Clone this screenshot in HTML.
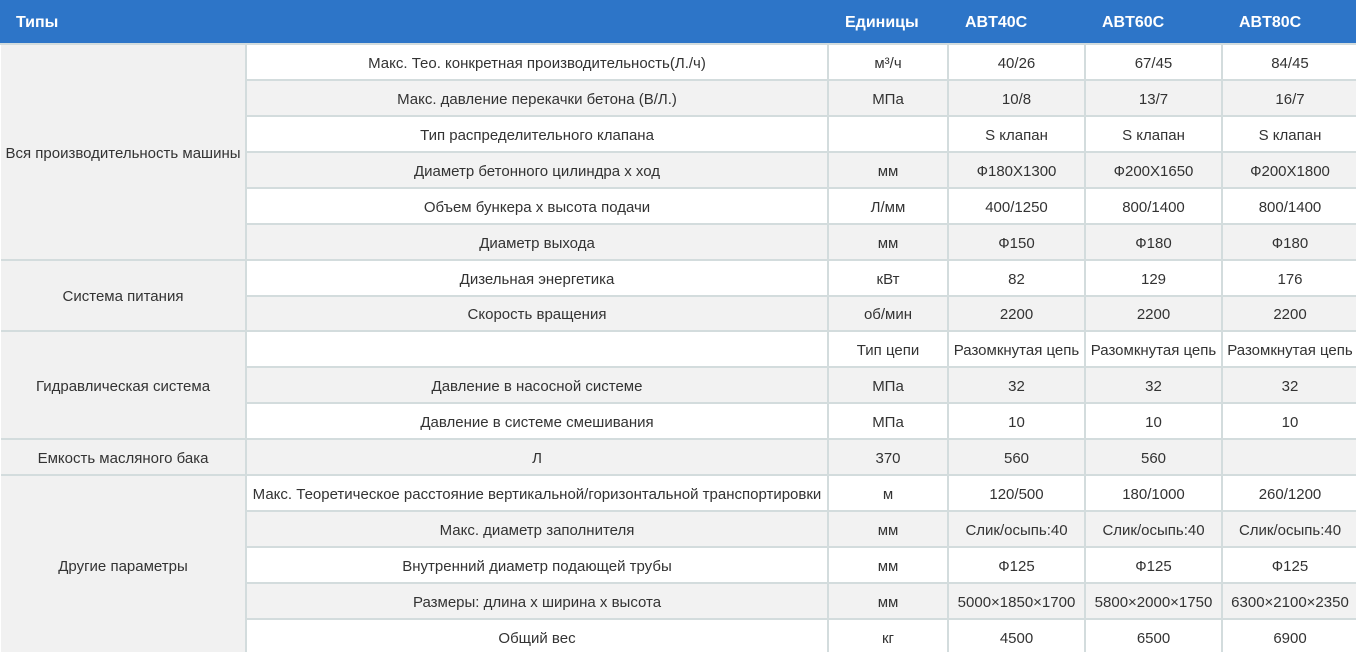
<!DOCTYPE html>
<html><head><meta charset="utf-8"><style>
html,body{margin:0;padding:0;background:#fff;width:1356px;height:652px;overflow:hidden}
table{border-collapse:collapse;table-layout:fixed;width:1356px;font-family:"Liberation Sans","DejaVu Sans",sans-serif;font-size:15px;color:#333}
td,th{border:2px solid #d3dcdd;text-align:center;padding:2px 0 0 0;white-space:nowrap;overflow:hidden}
thead th{background:#2d75c8;color:#fff;font-weight:bold;font-size:16px;height:41px;padding:0 0 0 16px;border-color:#2d75c8;border-bottom:2px solid #d3dcdd;border-right:1px solid #5a93d6;text-align:left}
thead th:first-child{padding-left:14px}
tbody tr{height:36px}
tbody tr.s{height:35px}
tr.g td{background:#f2f2f2}
td.l{background:#f1f1f1 !important}
td:first-child{border-left:none}
td:last-child,th:last-child{border-right:none}
</style></head><body>
<table>
<colgroup><col style="width:245px"><col style="width:582px"><col style="width:120px"><col style="width:137px"><col style="width:137px"><col style="width:135px"></colgroup>
<thead><tr><th>Типы</th><th></th><th>Единицы</th><th>ABT40C</th><th>ABT60C</th><th>ABT80C</th></tr></thead>
<tbody>
<tr><td class="l" rowspan="6">Вся производительность машины</td><td>Макс. Тео. конкретная производительность(Л./ч)</td><td>м³/ч</td><td>40/26</td><td>67/45</td><td>84/45</td></tr>
<tr class="g"><td>Макс. давление перекачки бетона (В/Л.)</td><td>МПа</td><td>10/8</td><td>13/7</td><td>16/7</td></tr>
<tr><td>Тип распределительного клапана</td><td></td><td>S клапан</td><td>S клапан</td><td>S клапан</td></tr>
<tr class="g"><td>Диаметр бетонного цилиндра x ход</td><td>мм</td><td>Ф180X1300</td><td>Ф200X1650</td><td>Ф200X1800</td></tr>
<tr><td>Объем бункера x высота подачи</td><td>Л/мм</td><td>400/1250</td><td>800/1400</td><td>800/1400</td></tr>
<tr class="g"><td>Диаметр выхода</td><td>мм</td><td>Ф150</td><td>Ф180</td><td>Ф180</td></tr>
<tr><td class="l" rowspan="2">Система питания</td><td>Дизельная энергетика</td><td>кВт</td><td>82</td><td>129</td><td>176</td></tr>
<tr class="g s"><td>Скорость вращения</td><td>об/мин</td><td>2200</td><td>2200</td><td>2200</td></tr>
<tr><td class="l" rowspan="3">Гидравлическая система</td><td></td><td>Тип цепи</td><td>Разомкнутая цепь</td><td>Разомкнутая цепь</td><td>Разомкнутая цепь</td></tr>
<tr class="g"><td>Давление в насосной системе</td><td>МПа</td><td>32</td><td>32</td><td>32</td></tr>
<tr><td>Давление в системе смешивания</td><td>МПа</td><td>10</td><td>10</td><td>10</td></tr>
<tr class="g"><td class="l">Емкость масляного бака</td><td>Л</td><td>370</td><td>560</td><td>560</td><td></td></tr>
<tr><td class="l" rowspan="5">Другие параметры</td><td>Макс. Теоретическое расстояние вертикальной/горизонтальной транспортировки</td><td>м</td><td>120/500</td><td>180/1000</td><td>260/1200</td></tr>
<tr class="g"><td>Макс. диаметр заполнителя</td><td>мм</td><td>Слик/осыпь:40</td><td>Слик/осыпь:40</td><td>Слик/осыпь:40</td></tr>
<tr><td>Внутренний диаметр подающей трубы</td><td>мм</td><td>Ф125</td><td>Ф125</td><td>Ф125</td></tr>
<tr class="g"><td>Размеры: длина x ширина x высота</td><td>мм</td><td>5000×1850×1700</td><td>5800×2000×1750</td><td>6300×2100×2350</td></tr>
<tr><td>Общий вес</td><td>кг</td><td>4500</td><td>6500</td><td>6900</td></tr>
</tbody></table>
</body></html>
